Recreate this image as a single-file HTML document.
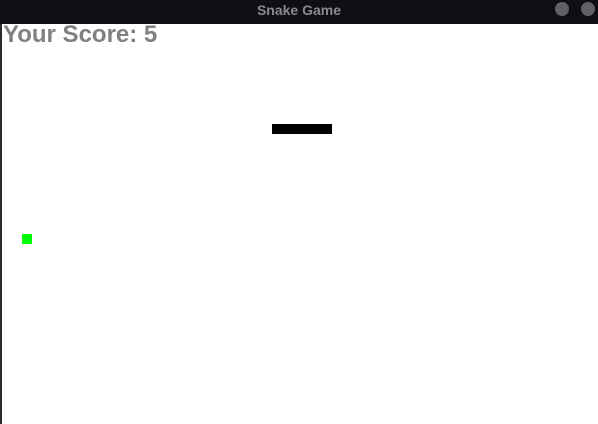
<!DOCTYPE html>
<html><head><meta charset="utf-8"><style>
html,body{margin:0;padding:0;width:598px;height:424px;overflow:hidden;background:#fff;position:relative;font-family:"Liberation Sans",sans-serif}
.bar{position:absolute;left:0;top:0;width:598px;height:24px;background:#0e0f14}
.title{position:absolute;left:0;width:598px;top:1px;text-align:center;color:#8a8a8e;font-weight:bold;font-size:14px;line-height:18px}
.c{position:absolute;top:2px;width:14px;height:14px;border-radius:50%;background:#606066}
.lb{position:absolute;left:0;top:24px;width:2px;height:400px;background:#2b2b30}
.score{position:absolute;left:3px;top:20px;color:#808080;font-weight:bold;font-size:24px;line-height:29px}
</style></head><body>
<div class="bar"><div class="title">Snake Game</div><div class="c" style="left:555px"></div><div class="c" style="left:581px"></div></div>
<div class="lb"></div>
<div class="score">Your Score: 5</div>
<div style="position:absolute;left:272px;top:124px;width:60px;height:10px;background:#000"></div>
<div style="position:absolute;left:22px;top:234px;width:10px;height:10px;background:#00ff00"></div>
</body></html>
